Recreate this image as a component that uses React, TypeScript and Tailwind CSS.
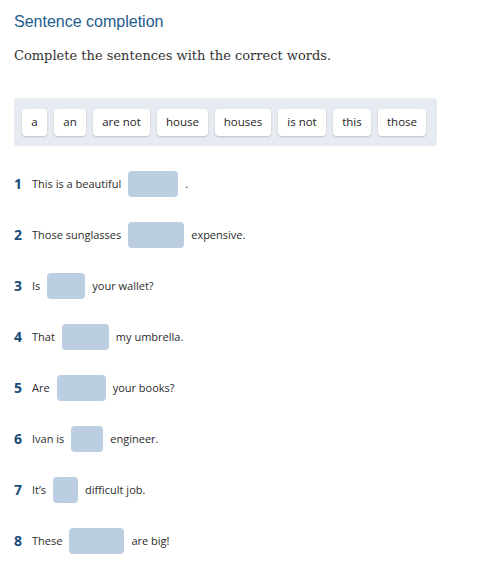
import React from "react";

const words: { t: string; w: string }[] = [
  { t: "a", w: "w-[25px]" },
  { t: "an", w: "w-[32px]" },
  { t: "are not", w: "w-[57px]" },
  { t: "house", w: "w-[51px]" },
  { t: "houses", w: "w-[56px]" },
  { t: "is not", w: "w-[48px]" },
  { t: "this", w: "w-[38px]" },
  { t: "those", w: "w-[48px]" },
];

type Row = { n: number; before: string; w: string; after: string };
const rows: Row[] = [
  { n: 1, before: "This is a beautiful", w: "w-[50px]", after: "." },
  { n: 2, before: "Those sunglasses", w: "w-[56px]", after: "expensive." },
  { n: 3, before: "Is", w: "w-[38px]", after: "your wallet?" },
  { n: 4, before: "That", w: "w-[47px]", after: "my umbrella." },
  { n: 5, before: "Are", w: "w-[49px]", after: "your books?" },
  { n: 6, before: "Ivan is", w: "w-[32px]", after: "engineer." },
  { n: 7, before: "It’s", w: "w-[25px]", after: "difficult job." },
  { n: 8, before: "These", w: "w-[55px]", after: "are big!" },
];

export default function App() {
  return (
    <div className="w-[501px] h-[571px] bg-white pl-[14px] pt-[12px] font-['Open_Sans',sans-serif]">
      <h1 className="text-[16px] leading-[20px] text-[#1d5c8c] font-['Liberation_Sans',Arial,sans-serif]">
        Sentence completion
      </h1>
      <p className="mt-[15px] text-[13px] leading-[18px] text-[#333] font-['DejaVu_Serif',serif]">
        Complete the sentences with the correct words.
      </p>
      <div className="mt-[33px] w-[423px] h-[48px] rounded-[3px] bg-[#e5ebf1] flex items-center gap-[7px] pl-[8px]">
        {words.map((w) => (
          <div
            key={w.t}
            className={`${w.w} h-[27px] whitespace-nowrap flex items-center justify-center rounded-[4px] bg-white shadow-[0_1px_2px_rgba(0,0,0,0.18)] text-[11.5px] font-medium text-[#1e1e1e]`}
          >
            {w.t}
          </div>
        ))}
      </div>
      <div className="mt-[25px] flex flex-col gap-[25px]">
        {rows.map((r) => (
          <div key={r.n} className="flex items-center h-[26px] whitespace-nowrap">
            <span className="w-[18px] text-[14px] font-bold text-[#1a4b78] -mt-[2px]">{r.n}</span>
            <span className="text-[11px] text-[#2b2b2b]">{r.before}</span>
            <span className={`${r.w} mx-[7px] h-[26px] rounded-[4px] bg-[#bccee1]`} />
            <span className="text-[11px] text-[#2b2b2b]">{r.after}</span>
          </div>
        ))}
      </div>
    </div>
  );
}
